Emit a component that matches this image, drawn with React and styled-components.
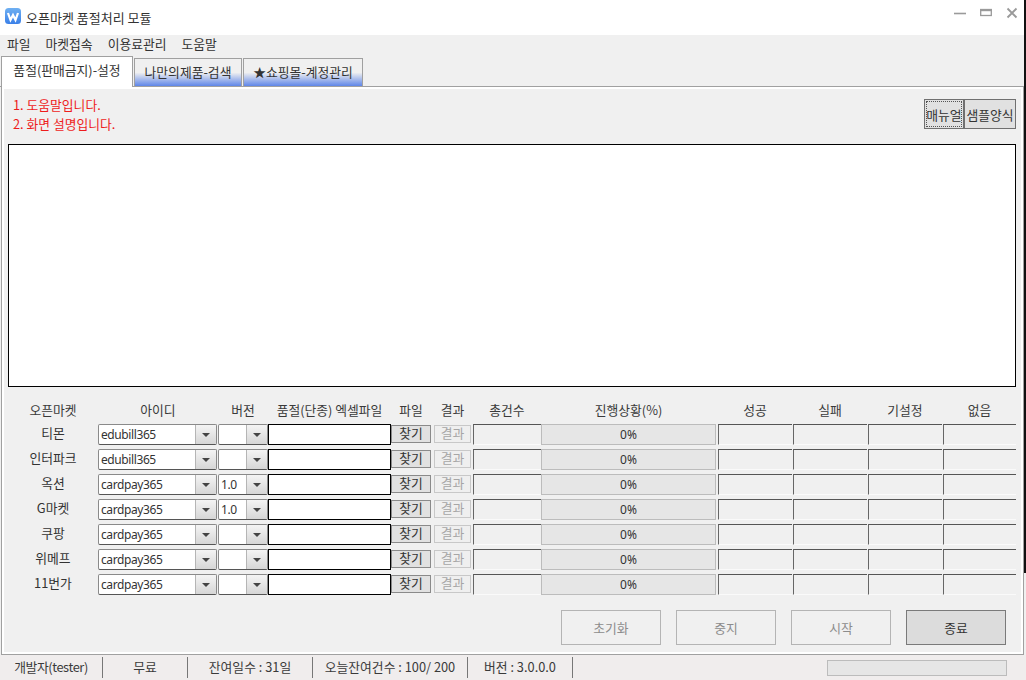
import React from "react";
import styled, { createGlobalStyle } from "styled-components";

const Global = createGlobalStyle`
  html, body { margin: 0; padding: 0; background: #fff; }
  * { box-sizing: border-box; }
  body { font-family: "Noto Sans CJK KR", "Noto Sans", sans-serif; font-size: 12.8px; color: #333; }
`;

const Win = styled.div`
  width: 1026px; height: 680px; display: flex; flex-direction: column; overflow: hidden;
  background: #f0f0f0; position: relative;
`;
const EdgeShadow = styled.div`
  position: absolute; top: 0; right: 0; width: 2px; height: 573px; background: #111;
`;
const TitleBar = styled.div`
  height: 35px; flex: none; background: #fff; display: flex; align-items: center; padding: 0 0 0 5px;
`;
const TitleText = styled.span`
  margin-left: 5px; font-size: 13px; flex: 1; margin-top: -1px;
`;
const WinBtns = styled.div`
  display: flex; align-items: center; gap: 14px; padding-right: 8px; margin-top: -10px;
`;
const Menu = styled.div`
  height: 21px; flex: none; display: flex; align-items: center; padding: 0 0 5px 7px; gap: 15px; background: #f0f0f0;
`;
const TabStrip = styled.div`
  height: 31px; flex: none; display: flex; align-items: flex-end; gap: 1px; border-bottom: 1px solid #a0a0a0; margin-right: 2px; padding-left: 1px;
`;
const Tab = styled.div`
  height: ${p => (p.$active ? "31px" : "28px")};
  width: ${p => p.$w}px;
  display: flex; align-items: center; justify-content: center;
  border: 1px solid #a0a0a0; border-bottom: none;
  background: ${p => (p.$active ? "#fff" : "linear-gradient(#f0f0f0 0%, #f0f0f0 50%, #5f86e8 100%)")};
  ${p => p.$active && "margin-bottom: -1px; position: relative; z-index: 1; padding-bottom: 5px;"}
  ${p => !p.$active && "padding-bottom: 3px;"}
`;
const Page = styled.div`
  flex: none; height: 568px; margin: 0 2px 0 1px; padding: 2px 7px 0 6px;
  border: 1px solid #a0a0a0; border-top: none;
  box-shadow: inset 2px 0 #fff, inset -2px 0 #fff, inset 0 -2px #fff, inset 0 2px #fff;
  display: flex; flex-direction: column;
`;
const HelpRow = styled.div`
  height: 55px; flex: none; display: flex; justify-content: space-between;
`;
const Help = styled.div`
  color: #ee1c1c; line-height: 19px; padding: 6px 0 0 5px;
`;
const HelpBtns = styled.div`
  display: flex; margin-top: 10px; height: 30px;
`;
const TopBtn = styled.button`
  width: ${p => p.$w}px; height: 30px; padding: 0; font: inherit; color: #333; white-space: nowrap; overflow: hidden;
  background: #e1e1e1; border: 1px solid #707070;
  ${p => p.$focus && "outline: 1px dotted #555; outline-offset: -3px;"}
`;
const LogBox = styled.div`
  height: 243px; flex: none; background: #fff; border: 1px solid #000;
`;
const Grid = styled.div`
  margin-top: 10px; display: grid; align-items: center;
  grid-template-columns: 90px 120px 50px 123px 40px 3px 37px 2px 68px 175px 2px 74px 1px 74px 1px 74px 1px 73px;
  grid-auto-rows: 25px;
`;
const HeadRow = styled.div`
  display: contents;
`;
const Head = styled.div`
  text-align: center; color: #3a3a3a; height: 24px; line-height: 24px; white-space: nowrap;
  grid-column: ${p => p.$col};
`;
const Market = styled.div`
  text-align: center; margin-top: -4px;
`;
const Combo = styled.div`
  height: 21px; display: flex; background: #fff; border: 1px solid #8a8a8a; border-bottom-color: #555; border-radius: 2px; margin-right: ${p => p.$mr}px; overflow: hidden;
`;
const ComboText = styled.span`
  flex: 1; padding-left: 2px; line-height: 20px; font-size: 12px; letter-spacing: -0.4px; font-family: "Noto Sans", sans-serif; white-space: nowrap;
`;
const ComboArrow = styled.span`
  width: 21px; flex: none; display: flex; align-items: center; justify-content: center;
  background: linear-gradient(#f4f4f4, #d6d6d6); border-left: 1px solid #b5b5b5;
  &::after { content: ""; border-left: 4px solid transparent; border-right: 4px solid transparent; border-top: 4px solid #444; }
`;
const FileInput = styled.div`
  height: 21px; background: #fff; border: 1px solid #000;
`;
const Find = styled.button`
  height: 18px; width: 40px; margin-top: -1px; padding: 0 0 2px; font: inherit; color: #333; background: #e1e1e1; border: 1px solid #8a8a8a; line-height: 14px;
`;
const Result = styled.button`
  height: 18px; width: 37px; margin-top: -1px; padding: 0 0 2px; font: inherit; color: #a6a6a6; background: #efefef; border: 1px solid #c8c8c8; line-height: 14px;
  grid-column: 7;
`;
const Sunk = styled.div`
  height: 21px; background: #f0f0f0; border-top: 1px solid #555; border-left: 1px solid #666; border-bottom: 1px solid #fafafa;
  grid-column: ${p => p.$col};
`;
const Progress = styled.div`
  height: 21px; background: #e6e6e6; border: 1px solid #bcbcbc; text-align: center; line-height: 19px; font-size: 12px; font-family: "Noto Sans", sans-serif;
`;
const Actions = styled.div`
  display: flex; gap: 15px; margin-top: 13px; justify-content: flex-end; padding-right: 10px;
`;
const ActionBtn = styled.button`
  width: 100px; height: 35px; padding: 0; font: inherit;
  background: ${p => (p.$on ? "#dcdcdc" : "#f0f0f0")};
  border: 1px solid ${p => (p.$on ? "#7a7a7a" : "#b4b4b4")};
  color: ${p => (p.$on ? "#333" : "#8c8c8c")};
`;
const Status = styled.div`
  height: 25px; flex: none; background: #f0eded; display: flex; align-items: center; color: #3a3a3a; padding-right: 19px;
`;
const StatusCell = styled.div`
  width: ${p => p.$w}px; height: 21px; line-height: 20px; text-align: center; border-right: 1px solid #777; white-space: nowrap; flex: none;
  letter-spacing: ${p => p.$ls || "0"};
`;
const Spacer = styled.div` flex: 1; `;
const StatusBar = styled.div`
  width: 180px; height: 16px; background: #e6e6e6; border: 1px solid #bcbcbc;
`;

const rows = [
  ["티몬", "edubill365", ""],
  ["인터파크", "edubill365", ""],
  ["옥션", "cardpay365", "1.0"],
  ["G마켓", "cardpay365", "1.0"],
  ["쿠팡", "cardpay365", ""],
  ["위메프", "cardpay365", ""],
  ["11번가", "cardpay365", ""],
];
const heads = [
  ["오픈마켓", "1"], ["아이디", "2"], ["버전", "3"], ["품절(단종) 엑셀파일", "4"], ["파일", "5"], ["결과", "7"],
  ["총건수", "9"], ["진행상황(%)", "10"], ["성공", "12"], ["실패", "14"], ["기설정", "16"], ["없음", "18"],
];

export default function App() {
  return (
    <Win>
      <Global />
      <TitleBar>
        <svg width="16" height="16" viewBox="0 0 16 16" style={{ marginTop: -3 }}>
          <defs>
            <linearGradient id="logo" x1="0" y1="0" x2="0" y2="1">
              <stop offset="0" stopColor="#6fb0f2" />
              <stop offset="1" stopColor="#3a80e8" />
            </linearGradient>
          </defs>
          <rect width="16" height="16" rx="3.5" fill="url(#logo)" />
          <path d="M3 5 L5.5 12 L8 7 L10.5 12 L13 5" fill="none" stroke="#fff" strokeWidth="2.2" />
        </svg>
        <TitleText>오픈마켓 품절처리 모듈</TitleText>
        <WinBtns>
          <svg width="12" height="12" viewBox="0 0 12 12"><path d="M0 6.5h12" stroke="#9a9a9a" strokeWidth="1.6" /></svg>
          <svg width="12" height="12" viewBox="0 0 12 12"><rect x=".7" y="2.5" width="10.6" height="6" fill="none" stroke="#9a9a9a" strokeWidth="1.3" /><path d="M0 3.2h12" stroke="#9a9a9a" strokeWidth="2" /></svg>
          <svg width="12" height="12" viewBox="0 0 12 12"><path d="M1.5 1.5l9 9M10.5 1.5l-9 9" stroke="#9a9a9a" strokeWidth="1.8" /></svg>
        </WinBtns>
      </TitleBar>
      <Menu>
        <span>파일</span><span>마켓접속</span><span>이용료관리</span><span>도움말</span>
      </Menu>
      <TabStrip>
        <Tab $active $w={132}>품절(판매금지)-설정</Tab>
        <Tab $w={108}>나만의제품-검색</Tab>
        <Tab $w={120}>★쇼핑몰-계정관리</Tab>
      </TabStrip>
      <Page>
        <HelpRow>
          <Help>1. 도움말입니다.<br />2. 화면 설명입니다.</Help>
          <HelpBtns>
            <TopBtn $w={40} $focus>매뉴얼</TopBtn>
            <TopBtn $w={52}>샘플양식</TopBtn>
          </HelpBtns>
        </HelpRow>
        <LogBox />
        <Grid>
          <HeadRow>
            {heads.map(([t, c]) => <Head key={t} $col={c}>{t}</Head>)}
          </HeadRow>
          {rows.map(([m, id, v]) => (
            <React.Fragment key={m}>
              <Market>{m}</Market>
              <Combo $mr={1}><ComboText>{id}</ComboText><ComboArrow /></Combo>
              <Combo $mr={0}><ComboText>{v}</ComboText><ComboArrow /></Combo>
              <FileInput />
              <Find>찾기</Find>
              <Result>결과</Result>
              <Sunk $col="9" />
              <Progress>0%</Progress>
              <Sunk $col="12" />
              <Sunk $col="14" />
              <Sunk $col="16" />
              <Sunk $col="18" />
            </React.Fragment>
          ))}
        </Grid>
        <Actions>
          <ActionBtn>초기화</ActionBtn>
          <ActionBtn>중지</ActionBtn>
          <ActionBtn>시작</ActionBtn>
          <ActionBtn $on>종료</ActionBtn>
        </Actions>
      </Page>
      <Status>
        <StatusCell $w={103} $ls="-0.4px">개발자(tester)</StatusCell>
        <StatusCell $w={85}>무료</StatusCell>
        <StatusCell $w={125}>잔여일수 : 31일</StatusCell>
        <StatusCell $w={155}>오늘잔여건수 : 100/ 200</StatusCell>
        <StatusCell $w={105}>버전 : 3.0.0.0</StatusCell>
        <Spacer />
        <StatusBar />
      </Status>
      <EdgeShadow />
    </Win>
  );
}
